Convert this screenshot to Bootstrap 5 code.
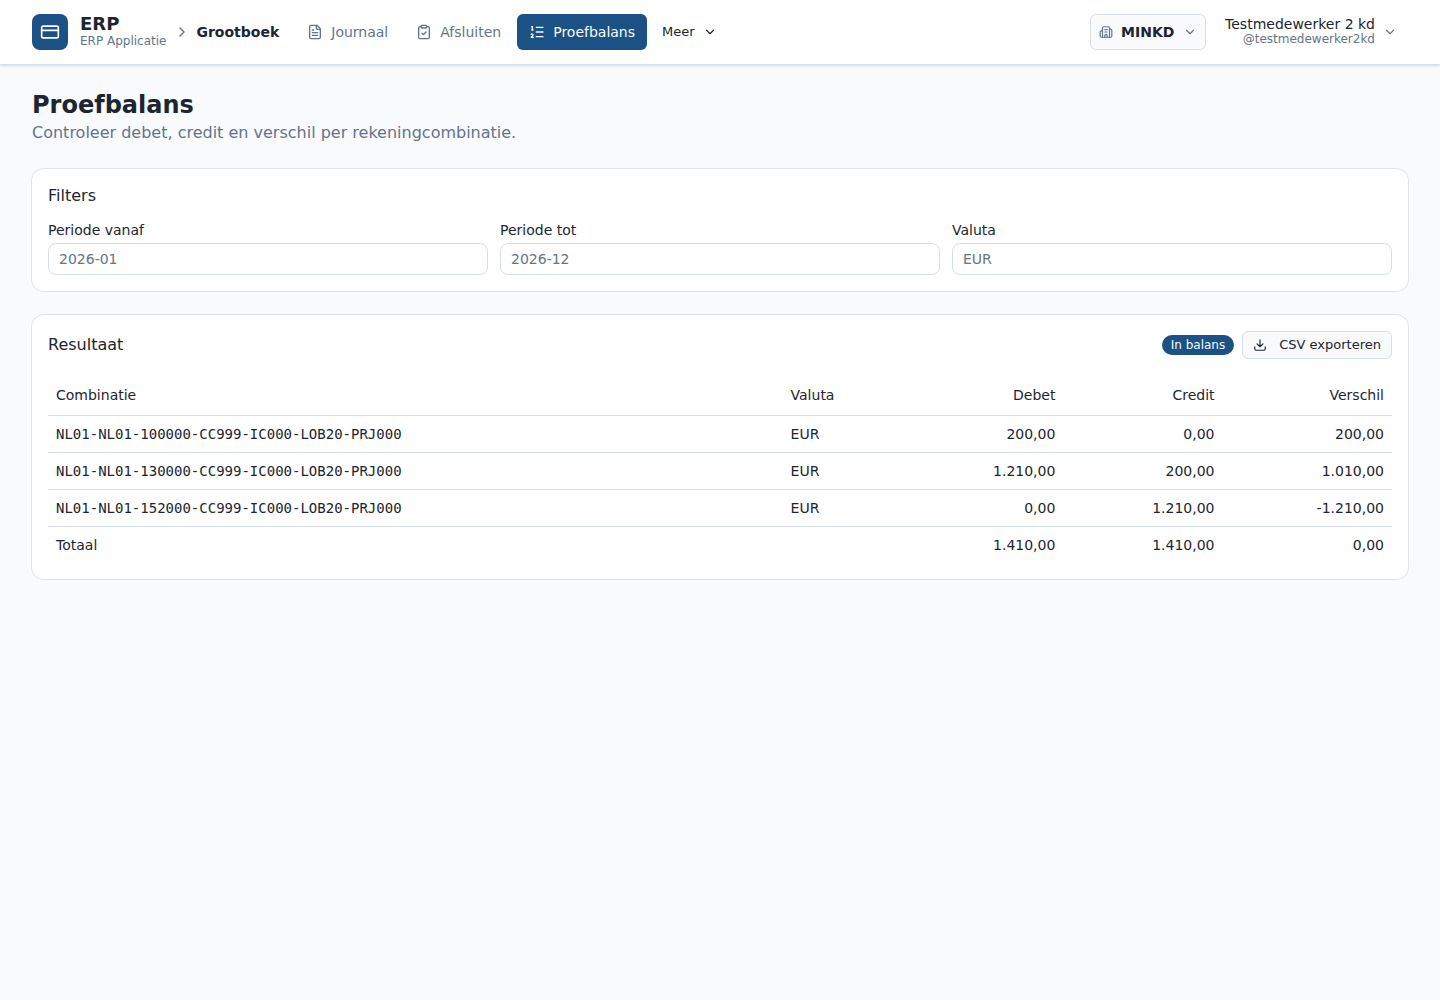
<!DOCTYPE html>
<html lang="nl">
<head>
<meta charset="utf-8">
<meta name="viewport" content="width=device-width, initial-scale=1">
<title>Proefbalans</title>
<link href="https://cdn.jsdelivr.net/npm/bootstrap@5.3.0/dist/css/bootstrap.min.css" rel="stylesheet">
<style>
:root{--ink:#1c2530;--muted:#64748b;--line:#d6dee7;--brand:#1c5185;--page:#f8fafc}
body{font-family:"DejaVu Sans",sans-serif;font-size:14px;line-height:20px;color:var(--ink);background:var(--page)}
svg{fill:none;stroke:currentColor;stroke-width:2;stroke-linecap:round;stroke-linejoin:round;flex:none}
.i14{width:14px;height:14px}.i16{width:16px;height:16px}.i20{width:20px;height:20px}
.topbar{height:65px;border-bottom:1px solid var(--line);box-shadow:0 1px 3px rgba(0,0,0,.1),0 1px 2px -1px rgba(0,0,0,.1)}
.soft{color:var(--muted)}
.logo{width:36px;height:36px;border-radius:8px;background:var(--brand)}
.brand-name{font-size:18px;line-height:20px}
.brand-sub,.user-sub{font-size:12px;line-height:14px;padding-bottom:2px}
.user-name{line-height:16px}
.crumb{margin-left:-2px}
.tab{height:36px;padding:0 12px;border-radius:6px;color:var(--muted);text-decoration:none}
.tab.active{background:var(--brand);color:#f8fafc}
.plain-btn{height:28px;padding:0 10px;border:1px solid transparent;border-radius:6px;background:none;color:var(--ink);font-size:13px;line-height:20px}
.outlined{border-color:var(--line);background:var(--page)}
.company{height:36px;min-width:116px;padding:0 8px;border:1px solid var(--line);border-radius:6px;background:var(--page);color:var(--ink)}
.user{padding:0 11px;border:0;background:none;color:var(--ink)}
.page-title{font-size:24px;line-height:32px}
.panel{border-radius:12px;box-shadow:0 0 0 1px rgba(28,37,48,.1)}
.panel-title{font-size:16px;line-height:22px}
.field label{line-height:14px;margin-bottom:6px}
.field .form-control{height:32px;padding:4px 10px;font-size:14px;border-color:var(--line);border-radius:8px;color:var(--ink)}
.field .form-control::placeholder{color:var(--muted);opacity:1}
.status{height:20px;padding:0 9px;border-radius:10px;background:var(--brand);color:#f8fafc;font-size:12px;line-height:20px}
.ledger{--bs-table-bg:transparent;--bs-table-color:var(--ink);border-color:var(--line)}
.ledger>:not(caption)>*>*{padding:8px}
.ledger th{font-weight:400}
.ledger thead th{padding-top:10px;padding-bottom:10px}
.ledger tfoot>tr>*{border-bottom:0}
.code{font-family:"DejaVu Sans Mono",monospace}
</style>
<script src="https://cdn.jsdelivr.net/npm/bootstrap@5.3.0/dist/js/bootstrap.bundle.min.js" defer></script>
</head>
<body>
<header class="topbar bg-white d-flex align-items-center justify-content-between">
  <div class="d-flex align-items-center gap-3 ps-3 ms-3">
    <div class="d-flex align-items-center gap-2">
      <div class="d-flex align-items-center">
        <span class="logo d-flex align-items-center justify-content-center text-white me-2"><svg class="i20" viewBox="0 0 24 24"><rect x="2" y="5" width="20" height="14" rx="2"/><path d="M2 10h20"/></svg></span>
        <div class="ms-1">
          <div class="brand-name fw-bold">ERP</div>
          <div class="brand-sub soft">ERP Applicatie</div>
        </div>
      </div>
      <svg class="i16 soft" viewBox="0 0 24 24"><path d="m9 18 6-6-6-6"/></svg>
      <span class="crumb fw-bold">Grootboek</span>
    </div>
    <nav class="d-flex align-items-center gap-1">
      <a href="#" class="tab d-flex align-items-center gap-2"><svg class="i16" viewBox="0 0 24 24"><path d="M15 2H6a2 2 0 0 0-2 2v16a2 2 0 0 0 2 2h12a2 2 0 0 0 2-2V7z"/><path d="M14 2v4a2 2 0 0 0 2 2h4M10 9H8M16 13H8M16 17H8"/></svg>Journaal</a>
      <a href="#" class="tab d-flex align-items-center gap-2"><svg class="i16" viewBox="0 0 24 24"><rect x="8" y="2" width="8" height="4" rx="1"/><path d="M16 4h2a2 2 0 0 1 2 2v14a2 2 0 0 1-2 2H6a2 2 0 0 1-2-2V6a2 2 0 0 1 2-2h2"/><path d="m9 14 2 2 4-4"/></svg>Afsluiten</a>
      <a href="#" class="tab active d-flex align-items-center gap-2" aria-current="page"><svg class="i16" viewBox="0 0 24 24"><path d="M11 5h10M11 12h10M11 19h10M4 4h1v5M4 9h2"/><path d="M6.5 20H3.4c0-1 2.6-1.925 2.6-3.5a1.5 1.5 0 0 0-2.6-1.02"/></svg>Proefbalans</a>
      <button type="button" class="plain-btn d-flex align-items-center gap-2">Meer<svg class="i14" viewBox="0 0 24 24"><path d="m6 9 6 6 6-6"/></svg></button>
    </nav>
  </div>
  <div class="d-flex align-items-center gap-2 pe-3 me-3">
    <button type="button" class="company d-flex align-items-center gap-2 fw-bold"><svg class="i14 soft" viewBox="0 0 24 24"><path d="M10 12h4M10 8h4M14 21v-3a2 2 0 0 0-4 0v3"/><path d="M6 10H4a2 2 0 0 0-2 2v7a2 2 0 0 0 2 2h16a2 2 0 0 0 2-2V9a2 2 0 0 0-2-2h-2"/><path d="M6 21V5a2 2 0 0 1 2-2h8a2 2 0 0 1 2 2v16"/></svg>MINKD<svg class="i14 soft ms-auto" viewBox="0 0 24 24"><path d="m6 9 6 6 6-6"/></svg></button>
    <button type="button" class="user d-flex align-items-center gap-2">
      <span class="text-end"><span class="user-name d-block">Testmedewerker 2 kd</span><span class="user-sub soft d-block">@testmedewerker2kd</span></span>
      <svg class="i14 soft" viewBox="0 0 24 24"><path d="m6 9 6 6 6-6"/></svg>
    </button>
  </div>
</header>
<main class="py-4 px-3 mx-3 d-flex flex-column gap-4">
  <div>
    <h1 class="page-title fw-bold mb-0">Proefbalans</h1>
    <p class="soft fs-6 lh-base mb-0">Controleer debet, credit en verschil per rekeningcombinatie.</p>
  </div>
  <section class="panel bg-white p-3">
    <h2 class="panel-title fw-normal mb-3">Filters</h2>
    <form class="d-flex">
      <div class="field flex-fill"><label class="d-block" for="van">Periode vanaf</label><input type="text" id="van" class="form-control" placeholder="2026-01"></div>
      <div class="field flex-fill mx-2 px-1"><label class="d-block" for="tot">Periode tot</label><input type="text" id="tot" class="form-control" placeholder="2026-12"></div>
      <div class="field flex-fill"><label class="d-block" for="val">Valuta</label><input type="text" id="val" class="form-control" placeholder="EUR"></div>
    </form>
  </section>
  <section class="panel bg-white p-3">
    <div class="d-flex align-items-center justify-content-between mb-3">
      <h2 class="panel-title fw-normal mb-0">Resultaat</h2>
      <div class="d-flex align-items-center gap-2">
        <span class="status">In balans</span>
        <button type="button" class="plain-btn outlined d-flex align-items-center"><svg class="i14 me-2" viewBox="0 0 24 24"><path d="M12 15V3M21 15v4a2 2 0 0 1-2 2H5a2 2 0 0 1-2-2v-4M7 10l5 5 5-5"/></svg><span class="ms-1">CSV exporteren</span></button>
      </div>
    </div>
    <table class="table ledger mb-0">
      <thead><tr><th scope="col">Combinatie</th><th scope="col">Valuta</th><th scope="col" class="text-end">Debet</th><th scope="col" class="text-end">Credit</th><th scope="col" class="text-end">Verschil</th></tr></thead>
      <tbody>
        <tr><td class="code">NL01-NL01-100000-CC999-IC000-LOB20-PRJ000</td><td>EUR</td><td class="text-end">200,00</td><td class="text-end">0,00</td><td class="text-end">200,00</td></tr>
        <tr><td class="code">NL01-NL01-130000-CC999-IC000-LOB20-PRJ000</td><td>EUR</td><td class="text-end">1.210,00</td><td class="text-end">200,00</td><td class="text-end">1.010,00</td></tr>
        <tr><td class="code">NL01-NL01-152000-CC999-IC000-LOB20-PRJ000</td><td>EUR</td><td class="text-end">0,00</td><td class="text-end">1.210,00</td><td class="text-end">-1.210,00</td></tr>
      </tbody>
      <tfoot><tr><td colspan="2">Totaal</td><td class="text-end">1.410,00</td><td class="text-end">1.410,00</td><td class="text-end">0,00</td></tr></tfoot>
    </table>
  </section>
</main>
</body>
</html>
